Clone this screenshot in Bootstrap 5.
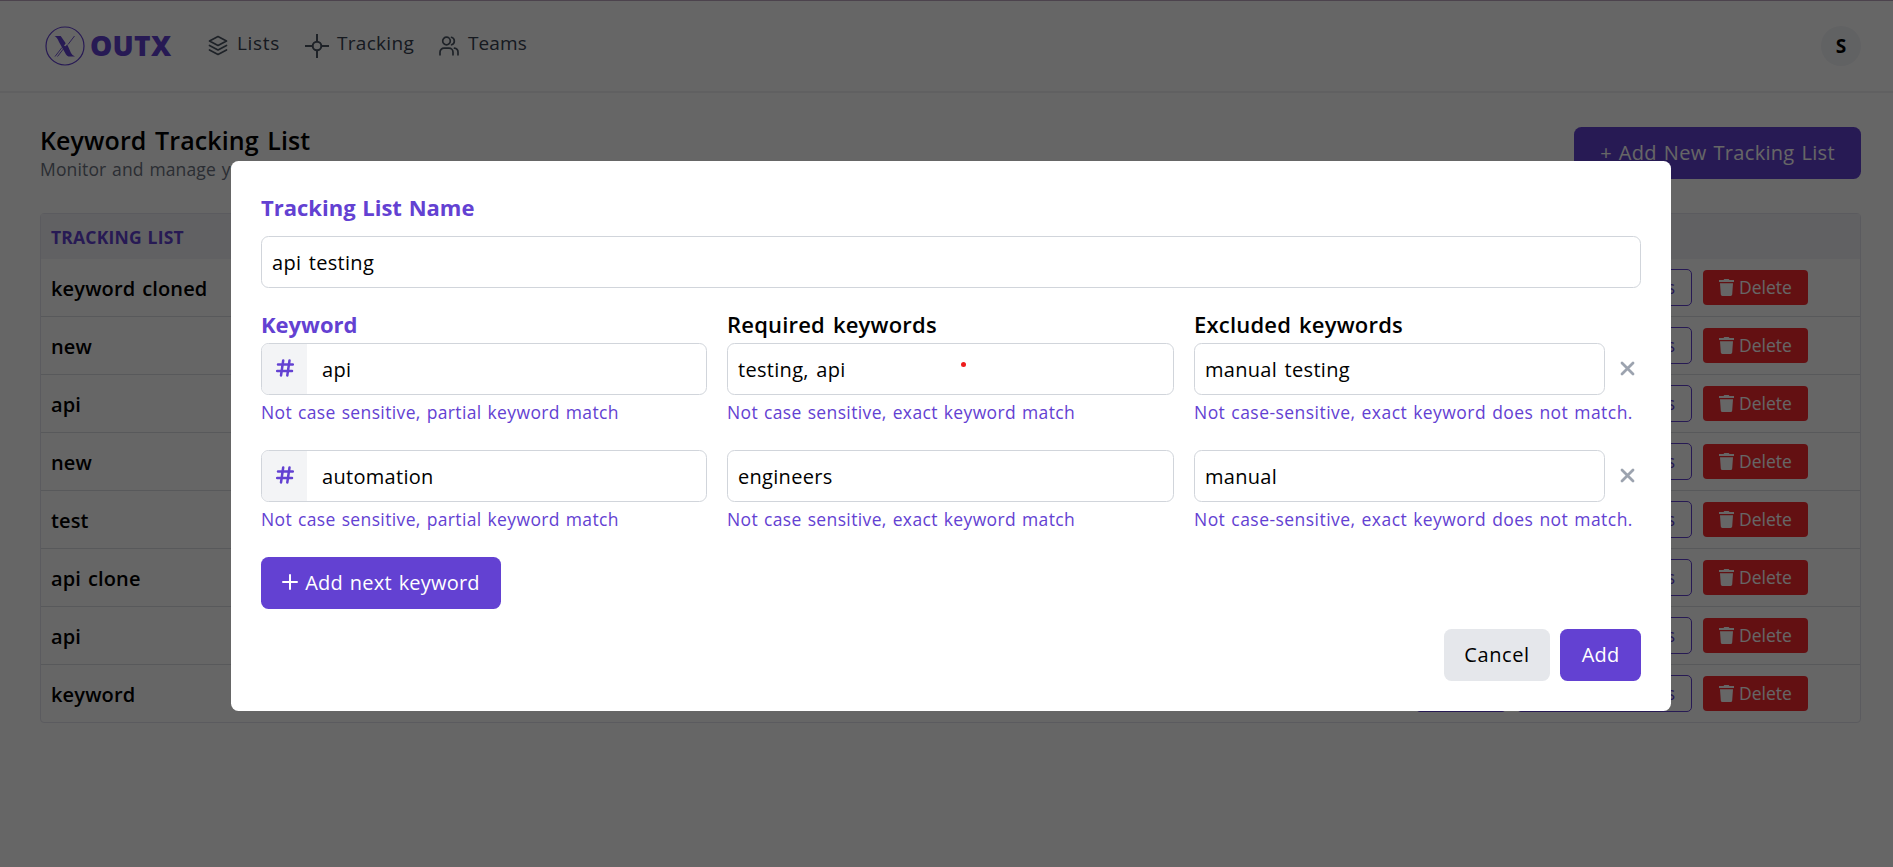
<!DOCTYPE html>
<html lang="en">
<head>
<meta charset="utf-8">
<meta name="viewport" content="width=device-width, initial-scale=1">
<title>OutX – Keyword Tracking</title>
<link rel="stylesheet" href="https://cdn.jsdelivr.net/npm/bootstrap@5.3.0/dist/css/bootstrap.min.css">
<style>
:root{--brand:#6341d2}
html,body{height:867px;overflow:hidden}
body{font-family:"Open Sans","Noto Sans",sans-serif;font-size:20px;line-height:30px;color:#000;background:#fff;border-top:1px solid #bfa8c0}
svg{flex:none;display:block}
.topbar{height:92px;border-bottom:2px solid #efeff2;padding:0 32px 0 45px}
.logo-word{font-weight:800;font-size:28px;letter-spacing:.3px;line-height:30px;color:var(--brand);margin:-2px 0 0 5px;width:118px}
.nav-entry{color:#374151;font-size:19px;font-weight:500;letter-spacing:.3px;white-space:nowrap;margin-top:-1px}
.nav-entry svg{color:#4b5563}
.nav-lists{letter-spacing:.7px}
.nav-entry span{margin-top:-5px}
.avatar{width:40px;height:40px;background:#f3f4f8;font-weight:700;font-size:19px}
.main-area{padding:33px 32px 0 40px}
.page-title{font-size:25px;font-weight:600;line-height:28px;letter-spacing:.1px;word-spacing:2px;margin:0}
.page-sub{font-size:17.5px;line-height:31px;letter-spacing:.15px;word-spacing:1px;color:#6b7280}
.btn-brand{background:var(--brand);color:#fff;border:0;border-radius:7.5px;height:52px;font-size:20px;padding:0;letter-spacing:.2px;word-spacing:1.5px}
.btn-brand:hover{background:#5636bd;color:#fff}
.btn-new{width:287px;letter-spacing:.3px;word-spacing:1.5px;margin-top:1px}
.btn-next{width:240px}
.btn-add{width:81px}
.btn-soft{background:#e5e7eb;color:#000;border:0;border-radius:7.5px;width:106px;height:52px;font-size:20px;padding:0;letter-spacing:.6px}
.list-table{margin-top:28px;border:1px solid #e4e4ee;border-radius:4px}
.list-head{height:45px;background:#f2f2f8;color:var(--brand);font-weight:700;font-size:17.5px;letter-spacing:.2px;word-spacing:1px;padding-left:10px}
.list-line{height:58px;padding:0 52px 0 10px;border-bottom:1px solid #dcdfe4;font-weight:600;letter-spacing:.15px;word-spacing:1.5px}
.list-line:last-child{border-bottom:0;height:57px}
.list-name{margin-top:2px}
.btn-line{height:37px;border:1px solid var(--brand);color:var(--brand);border-radius:5px;font-size:17.5px;padding:0 16px;line-height:35px}
.btn-edit{width:92px}
.btn-posts{width:176px;margin:0 11px 0 9px}
.btn-del{width:105px;height:35px;background:#f7282f;color:#fff;border-radius:4px;font-size:17.5px;padding:0 0 1px;border:0}
.scrim{position:fixed;inset:0;background:rgba(0,0,0,.6);z-index:10;padding-left:231px}
.sheet{width:1440px;height:550px;margin-top:161px;background:#fff;border-radius:7.5px;padding:29px 30px 30px}
.field-title{font-size:22px;font-weight:600;line-height:34px;letter-spacing:.2px;word-spacing:2px}
.field-title.strong{font-weight:700;letter-spacing:0;word-spacing:1px;color:var(--brand)}
.field-box{height:52px;border:1px solid #d1d5db;border-radius:7.5px;font-size:20px;line-height:51px;letter-spacing:.3px;word-spacing:2px;color:#000;padding:1px 10px 0;background:#fff;outline:0;width:100%}
.field-hash{padding:0;overflow:hidden}
.hash-cell{width:45px;background:#f3f4f6;color:var(--brand);padding-bottom:2px}
.hint{font-size:17.5px;line-height:26px;letter-spacing:.37px;word-spacing:1px;color:var(--brand);margin-top:4px;white-space:nowrap}
.hint-wide{letter-spacing:.46px}
.kw-grid{display:grid;grid-template-columns:446px 447px 447px;column-gap:20px}
.clear-x{color:#9ca3af;margin:0 6px 2px 0}
.field-narrow{width:411px}
.reddot{position:absolute;left:234px;top:19px;width:5px;height:5px;border-radius:50%;background:#ee1c1c}
</style>
</head>
<body>
<header class="topbar d-flex align-items-center">
  <svg width="40" height="42" viewBox="0 0 40 42" fill="none" stroke="#6341d2"><ellipse cx="20" cy="21" rx="19" ry="19" stroke-width="1.2"/><path d="M9.500 11h6.200l5 7.200-1.700 2.600 1.500.500 1.700-1.700L26 28q1.500 3 4 3.500h-6.500q-1.500-.5-2.500-2l-7-12.500q-2-5-4.500-6z" fill="#6341d2" stroke="none"/><path d="M29.500 11L23 19.500M17 22.500L10 31.500M19.500 22.500L12.500 31.500" stroke-width=".9"/></svg>
  <span class="logo-word">OUTX</span>
  <nav class="d-flex align-items-center">
    <div class="nav-entry nav-lists d-flex align-items-center" style="width:97px"><svg width="20" height="22" viewBox="0 0 20 22" fill="none" stroke="currentColor" stroke-width="1.700" stroke-linejoin="round" stroke-linecap="round"><path d="M10 1.500l8.500 4.500-8.500 4.500L1.500 6zM1.500 10.500l8.500 4.500 8.500-4.500M1.500 15l8.500 4.500 8.500-4.500"/></svg><span style="margin-left:9px">Lists</span></div>
    <div class="nav-entry d-flex align-items-center" style="width:134px"><svg width="24" height="24" viewBox="0 0 24 24" fill="none" stroke="currentColor" stroke-width="2"><circle cx="12" cy="12" r="4.300"/><path d="M12 0v7.500M12 16.500V24M0 12h7.500M16.500 12H24"/></svg><span class="ms-2">Tracking</span></div>
    <div class="nav-entry d-flex align-items-center" style="letter-spacing:.1px"><svg width="20" height="20" viewBox="0 0 20 20" fill="none" stroke="currentColor" stroke-width="1.700" stroke-linecap="round"><circle cx="7.500" cy="5" r="3.800"/><path d="M12.500 1.300a3.900 3.900 0 0 1 0 7.500M1 18.800v-2.600a4 4 0 0 1 4-4h5a4 4 0 0 1 4 4v2.600M15.500 12.200a3.700 3.700 0 0 1 3.500 3.900v2.700"/></svg><span style="margin-left:9px">Teams</span></div>
  </nav>
  <span class="avatar rounded-circle d-flex align-items-center justify-content-center ms-auto">S</span>
</header>
<main class="main-area">
  <div class="d-flex justify-content-between align-items-start">
    <div><h1 class="page-title">Keyword Tracking List</h1><div class="page-sub">Monitor and manage your keyword tracking lists</div></div>
    <button class="btn btn-brand btn-new">+ Add New Tracking List</button>
  </div>
  <div class="list-table" id="lists"><div class="list-head d-flex align-items-center">TRACKING LIST</div></div>
</main>

<div class="scrim">
  <div class="sheet d-flex flex-column">
    <div class="field-title strong">Tracking List Name</div>
    <input class="field-box mt-auto" value="api testing">
    <div class="kw-grid" style="margin-top:19px">
      <div class="field-title strong">Keyword</div><div class="field-title">Required keywords</div><div class="field-title">Excluded keywords</div>
    </div>
    <div id="keywords"></div>
    <div style="margin-top:25px"><button class="btn btn-brand btn-next d-flex align-items-center justify-content-center"><svg width="16" height="16" viewBox="0 0 16 16" stroke="#fff" stroke-width="2" stroke-linecap="round" style="margin:0 7px 2px 0"><path d="M8 1v14M1 8h14"/></svg>Add next keyword</button></div>
    <div class="d-flex justify-content-end" style="margin-top:20px;gap:10px"><button class="btn btn-soft">Cancel</button><button class="btn btn-brand btn-add">Add</button></div>
  </div>
</div>
<script src="https://cdn.jsdelivr.net/npm/bootstrap@5.3.0/dist/js/bootstrap.bundle.min.js"></script>
<script>
const lists = ["keyword cloned", "new", "api", "new", "test", "api clone", "api", "keyword"];
document.getElementById("lists").insertAdjacentHTML("beforeend", lists.map(name => `
  <div class="list-line d-flex align-items-center">
    <span class="list-name me-auto">${name}</span>
    <button class="btn btn-line btn-edit">Edit</button>
    <button class="btn btn-line btn-posts text-end">View posts</button>
    <button class="btn btn-del d-flex align-items-center justify-content-center"><svg width="15" height="17" viewBox="0 0 15 17" fill="currentColor" style="margin-right:5px"><path d="M0 1h4.500l.8-1h4.400l.8 1H15v2H0zM1 4.200h13l-.8 11.300a1.600 1.600 0 0 1-1.600 1.500H3.400a1.600 1.600 0 0 1-1.600-1.500z"/></svg>Delete</button>
  </div>`).join(""));

const keywords = [["api", "testing, api", "manual testing"], ["automation", "engineers", "manual"]];
document.getElementById("keywords").innerHTML = keywords.map(([word, required, excluded], i) => `
  <div class="kw-grid" style="margin-top:${i ? 25 : 2}px">
    <div>
      <div class="field-box field-hash d-flex"><span class="hash-cell d-flex align-items-center justify-content-center"><svg width="18" height="18" viewBox="0 0 18 18" fill="none" stroke="currentColor" stroke-width="2.500" stroke-linecap="round"><path d="M7.200 1.500L5 16.500M13.500 1.500L11.300 16.500M2 5.500h14.800M1.200 12h14.800"/></svg></span><span style="padding-left:15px">${word}</span></div>
      <div class="hint">Not case sensitive, partial keyword match</div>
    </div>
    <div>
      <div class="position-relative"><input class="field-box" value="${required}">${i ? "" : '<i class="reddot"></i>'}</div>
      <div class="hint">Not case sensitive, exact keyword match</div>
    </div>
    <div>
      <div class="d-flex align-items-center justify-content-between"><input class="field-box field-narrow" value="${excluded}"><svg class="clear-x" width="15" height="15" viewBox="0 0 15 15" fill="none" stroke="currentColor" stroke-width="2.800" stroke-linecap="round"><path d="M2 2l11 11M13 2L2 13"/></svg></div>
      <div class="hint hint-wide">Not case-sensitive, exact keyword does not match.</div>
    </div>
  </div>`).join("");
</script>
</body>
</html>
